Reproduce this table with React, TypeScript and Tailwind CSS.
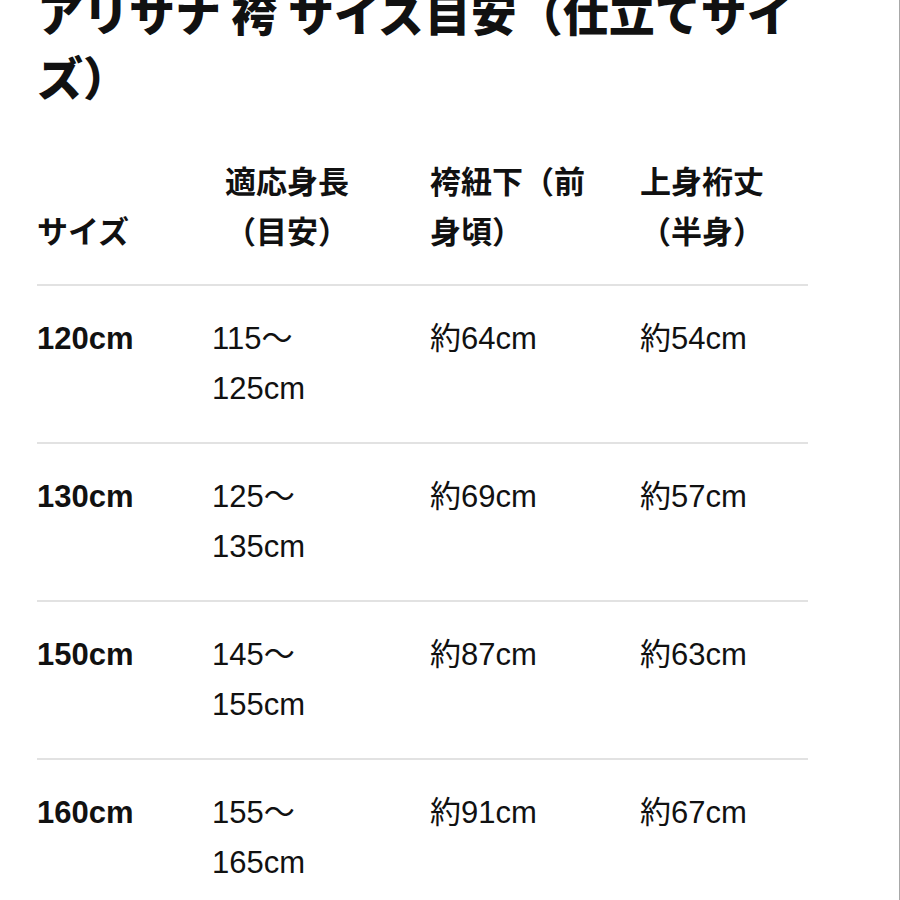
import React from "react";

const rows = [
  { size: "120cm", h: ["115～", "125cm"], a: "約64cm", b: "約54cm" },
  { size: "130cm", h: ["125～", "135cm"], a: "約69cm", b: "約57cm" },
  { size: "150cm", h: ["145～", "155cm"], a: "約87cm", b: "約63cm" },
  { size: "160cm", h: ["155～", "165cm"], a: "約91cm", b: "約67cm" },
];

const cjk = "font-['Noto_Sans_CJK_JP',sans-serif]";
const mixed = "font-['Liberation_Sans','Noto_Sans_CJK_JP',sans-serif]";

function Line({ children, className = "" }: { children: React.ReactNode; className?: string }) {
  return <div className={`h-[50px] leading-[50px] whitespace-nowrap ${className}`}>{children}</div>;
}

export default function App() {
  return (
    <div className="w-[900px] h-[900px] overflow-hidden bg-white border-r border-[#a8a8a8] text-[#111]">
      <div className="pl-[37px] pr-[91px] mt-[-21px]">
        <h1 className={`${cjk} text-[46px] leading-[64px] font-black`}>
          アリサナ 袴 サイズ目安（仕立てサイズ）
        </h1>
        <div className="mt-[48px]">
          <div className={`grid grid-cols-[175px_218px_210px_1fr] items-end pb-[29px] ${cjk} text-[31px] font-bold`}>
            <div>
              <Line>サイズ</Line>
            </div>
            <div className="pl-[13px]">
              <Line>適応身長</Line>
              <Line>（目安）</Line>
            </div>
            <div>
              <Line>袴紐下（前</Line>
              <Line>身頃）</Line>
            </div>
            <div>
              <Line>上身裄丈</Line>
              <Line>（半身）</Line>
            </div>
          </div>
          {rows.map((r) => (
            <div
              key={r.size}
              className={`grid grid-cols-[175px_218px_210px_1fr] items-start border-t-2 border-[#e2e2e2] pt-[28px] pb-[28px] ${mixed} text-[31px]`}
            >
              <div>
                <Line className="font-bold">{r.size}</Line>
              </div>
              <div>
                <Line>{r.h[0]}</Line>
                <Line>{r.h[1]}</Line>
              </div>
              <div>
                <Line>{r.a}</Line>
                <Line>&nbsp;</Line>
              </div>
              <div>
                <Line>{r.b}</Line>
              </div>
            </div>
          ))}
        </div>
      </div>
    </div>
  );
}
